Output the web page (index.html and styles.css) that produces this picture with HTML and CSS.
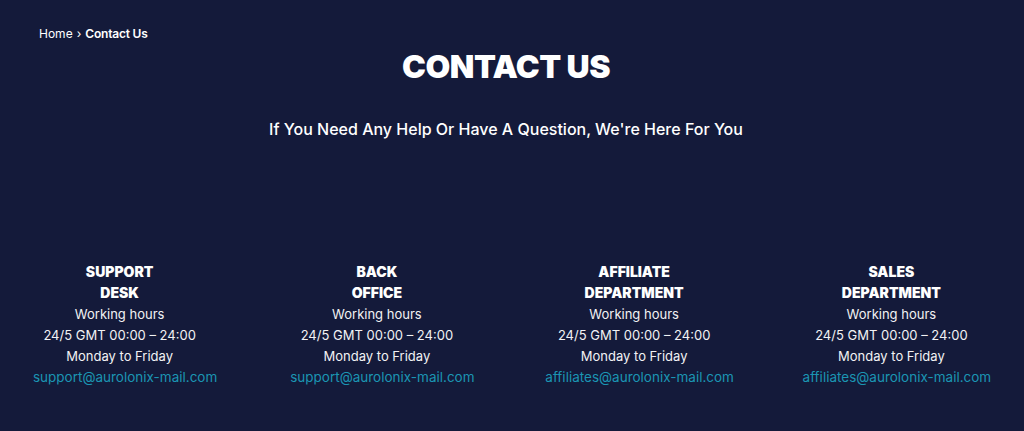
FILE: index.html
```html
<!DOCTYPE html>
<html lang="en">
<head>
<meta charset="utf-8">
<title>Contact Us</title>
<link rel="stylesheet" href="styles.css">
</head>
<body>
<div class="page">
  <nav class="crumbs"><a href="#" class="crumb-link">Home</a><span class="sep">›</span><span class="crumb-current">Contact Us</span></nav>
  <h1 class="title">CONTACT US</h1>
  <p class="subtitle">If You Need Any Help Or Have A Question, We're Here For You</p>
  <section class="contacts">
    <div class="card">
      <h3 class="card-title">SUPPORT<br>DESK</h3>
      <p class="line">Working hours</p>
      <p class="line">24/5 GMT 00:00 – 24:00</p>
      <p class="line">Monday to Friday</p>
      <a class="mail" href="#">support@aurolonix-mail.com</a>
    </div>
    <div class="card">
      <h3 class="card-title">BACK<br>OFFICE</h3>
      <p class="line">Working hours</p>
      <p class="line">24/5 GMT 00:00 – 24:00</p>
      <p class="line">Monday to Friday</p>
      <a class="mail" href="#">support@aurolonix-mail.com</a>
    </div>
    <div class="card">
      <h3 class="card-title">AFFILIATE<br>DEPARTMENT</h3>
      <p class="line">Working hours</p>
      <p class="line">24/5 GMT 00:00 – 24:00</p>
      <p class="line">Monday to Friday</p>
      <a class="mail" href="#">affiliates@aurolonix-mail.com</a>
    </div>
    <div class="card">
      <h3 class="card-title">SALES<br>DEPARTMENT</h3>
      <p class="line">Working hours</p>
      <p class="line">24/5 GMT 00:00 – 24:00</p>
      <p class="line">Monday to Friday</p>
      <a class="mail" href="#">affiliates@aurolonix-mail.com</a>
    </div>
  </section>
</div>
</body>
</html>
```

FILE: styles.css
```css
html, body {
  margin: 0;
  padding: 0;
  background: #141a3a;
}
body {
  font-family: "Inter", "Noto Sans", sans-serif;
  color: #ffffff;
  height: 431px;
  overflow: hidden;
}
.page {
  padding-top: 26px;
}
.crumbs {
  padding-left: 39px;
  font-size: 12px;
  line-height: 16px;
  display: flex;
  align-items: center;
  gap: 4px;
}
.crumb-link {
  color: #ffffff;
  text-decoration: none;
}
.sep {
  font-size: 12px;
}
.crumb-current {
  font-weight: 600;
  letter-spacing: -0.2px;
}
.title,
.subtitle {
  padding-right: 12px;
}
.title {
  margin: 6px 0 0;
  text-align: center;
  font-size: 32px;
  line-height: 38px;
  font-weight: 900;
  letter-spacing: -0.5px;
}
.subtitle {
  margin: 32px 0 0;
  text-align: center;
  font-size: 16px;
  line-height: 22px;
  font-weight: 500;
}
.contacts {
  margin: 121px 4px 0 -9px;
  display: grid;
  grid-template-columns: repeat(4, 1fr);
}
.card {
  text-align: center;
  font-size: 13px;
  line-height: 21px;
}
.card-title {
  margin: 0 0 1px;
  font-size: 14px;
  line-height: 21px;
  font-weight: 900;
}
.line {
  margin: 0;
  color: #f2f2f4;
}
.mail {
  display: block;
  color: #1b95b3;
  text-decoration: none;
  font-size: 13.5px;
  padding-left: 11px;
}
```
